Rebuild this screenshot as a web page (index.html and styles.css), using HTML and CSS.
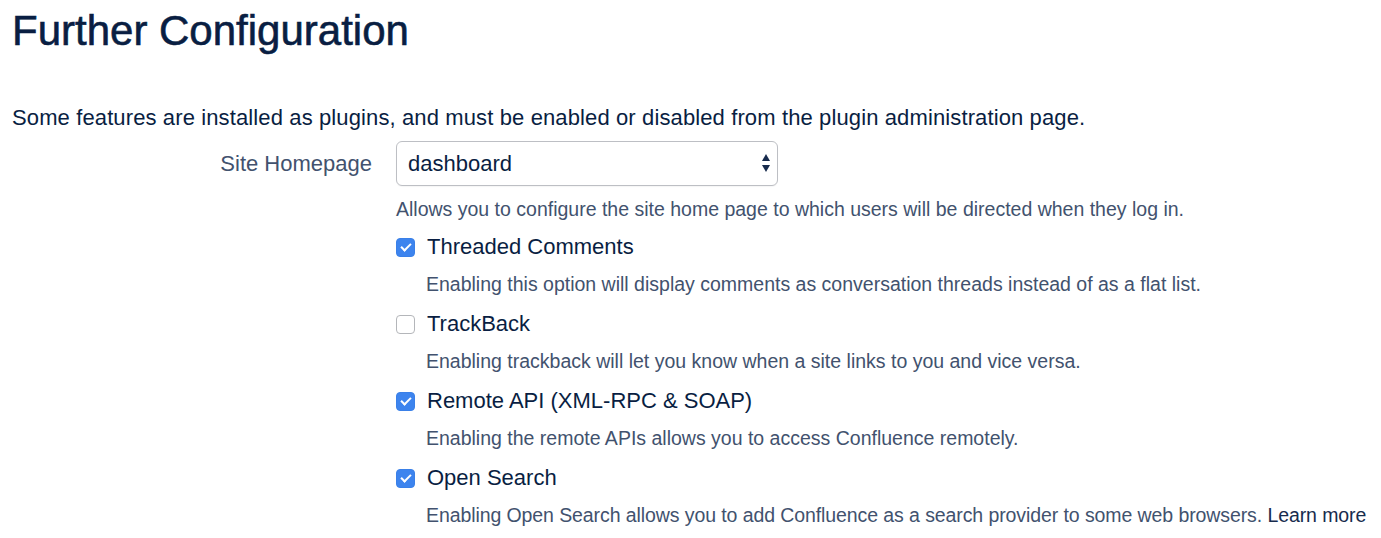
FILE: index.html
```html
<!DOCTYPE html>
<html lang="en">
<head>
<meta charset="utf-8">
<title>Further Configuration</title>
<link rel="stylesheet" href="styles.css">
</head>
<body>
<main class="page">
  <h1 class="title">Further Configuration</h1>
  <p class="intro">Some features are installed as plugins, and must be enabled or disabled from the plugin administration page.</p>
  <div class="field">
    <label class="field-label" for="homepage">Site Homepage</label>
    <div class="field-body">
      <div class="select-wrap">
        <select id="homepage" class="select">
          <option>dashboard</option>
        </select>
        <svg class="select-arrows" viewBox="0 0 8 19" aria-hidden="true">
          <polygon points="4,0 8,7 0,7"/>
          <polygon points="0,11 8,11 4,18"/>
        </svg>
      </div>
      <p class="help">Allows you to configure the site home page to which users will be directed when they log in.</p>
      <ul class="options">
        <li class="option">
          <label class="option-label"><input type="checkbox" class="checkbox" checked>Threaded Comments</label>
          <p class="option-desc">Enabling this option will display comments as conversation threads instead of as a flat list.</p>
        </li>
        <li class="option">
          <label class="option-label"><input type="checkbox" class="checkbox">TrackBack</label>
          <p class="option-desc">Enabling trackback will let you know when a site links to you and vice versa.</p>
        </li>
        <li class="option">
          <label class="option-label"><input type="checkbox" class="checkbox" checked>Remote API (XML-RPC &amp; SOAP)</label>
          <p class="option-desc">Enabling the remote APIs allows you to access Confluence remotely.</p>
        </li>
        <li class="option">
          <label class="option-label"><input type="checkbox" class="checkbox" checked>Open Search</label>
          <p class="option-desc option-desc-tight">Enabling Open Search allows you to add Confluence as a search provider to some web browsers. <a class="link" href="#">Learn more</a></p>
        </li>
      </ul>
    </div>
  </div>
</main>
</body>
</html>
```

FILE: styles.css
```css
html, body {
  margin: 0;
  background: #ffffff;
}

body {
  font-family: "Liberation Sans", Arial, sans-serif;
  color: #091E42;
}

.page {
  padding: 6px 0 0 12px;
}

.title {
  margin: 0;
  font-size: 42px;
  line-height: 50px;
  font-weight: 400;
  color: #091E42;
  -webkit-text-stroke: 0.6px #091E42;
}

.intro {
  margin: 49px 0 0;
  font-size: 22px;
  line-height: 26px;
  letter-spacing: 0.12px;
  color: #091E42;
  white-space: nowrap;
}

.field {
  display: grid;
  grid-template-columns: 360px 1fr;
  column-gap: 24px;
  margin-top: 10px;
}

.field-label {
  text-align: right;
  font-size: 22px;
  line-height: 26px;
  padding-top: 10px;
  color: #42526E;
}

.select-wrap {
  position: relative;
  width: 382px;
}

.select {
  -webkit-appearance: none;
  appearance: none;
  display: block;
  box-sizing: border-box;
  width: 100%;
  height: 45px;
  margin: 0;
  padding: 0 0 0 11px;
  border: 1px solid #BDBFC4;
  border-radius: 6px;
  background: #ffffff;
  box-shadow: 0 1px 1px rgba(0, 0, 0, 0.04);
  font-family: "Liberation Sans", Arial, sans-serif;
  font-size: 22px;
  color: #091E42;
}

.select-arrows {
  position: absolute;
  right: 8px;
  top: 13px;
  width: 8px;
  height: 19px;
  fill: #172B4D;
  pointer-events: none;
}

.help {
  margin: 11px 0 0;
  font-size: 19.5px;
  line-height: 24px;
  color: #42526E;
  white-space: nowrap;
}

.options {
  list-style: none;
  margin: 12px 0 0;
  padding: 0;
  display: flex;
  flex-direction: column;
  gap: 14px;
}

.option-label {
  display: flex;
  align-items: flex-start;
  gap: 12px;
  padding-top: 1px;
  font-size: 22px;
  line-height: 26px;
  color: #091E42;
}

.checkbox {
  -webkit-appearance: none;
  appearance: none;
  position: relative;
  flex: none;
  box-sizing: border-box;
  width: 19px;
  height: 19px;
  margin: 4px 0 0;
  border: 1px solid #B4B6BA;
  border-radius: 4px;
  background: #ffffff;
}

.checkbox:checked {
  background: #3D84EE;
  border-color: #3A80E8;
}

.checkbox:checked::after {
  content: "";
  position: absolute;
  left: 5.5px;
  top: 2px;
  width: 4px;
  height: 8px;
  border: solid #ffffff;
  border-width: 0 2px 2px 0;
  transform: rotate(45deg);
}

.option-desc {
  margin: 12px 0 0 30px;
  font-size: 19.5px;
  line-height: 24px;
  color: #42526E;
  white-space: nowrap;
}

.option-desc-tight {
  letter-spacing: -0.09px;
}

.link {
  color: #172B4D;
  text-decoration: none;
}
```
